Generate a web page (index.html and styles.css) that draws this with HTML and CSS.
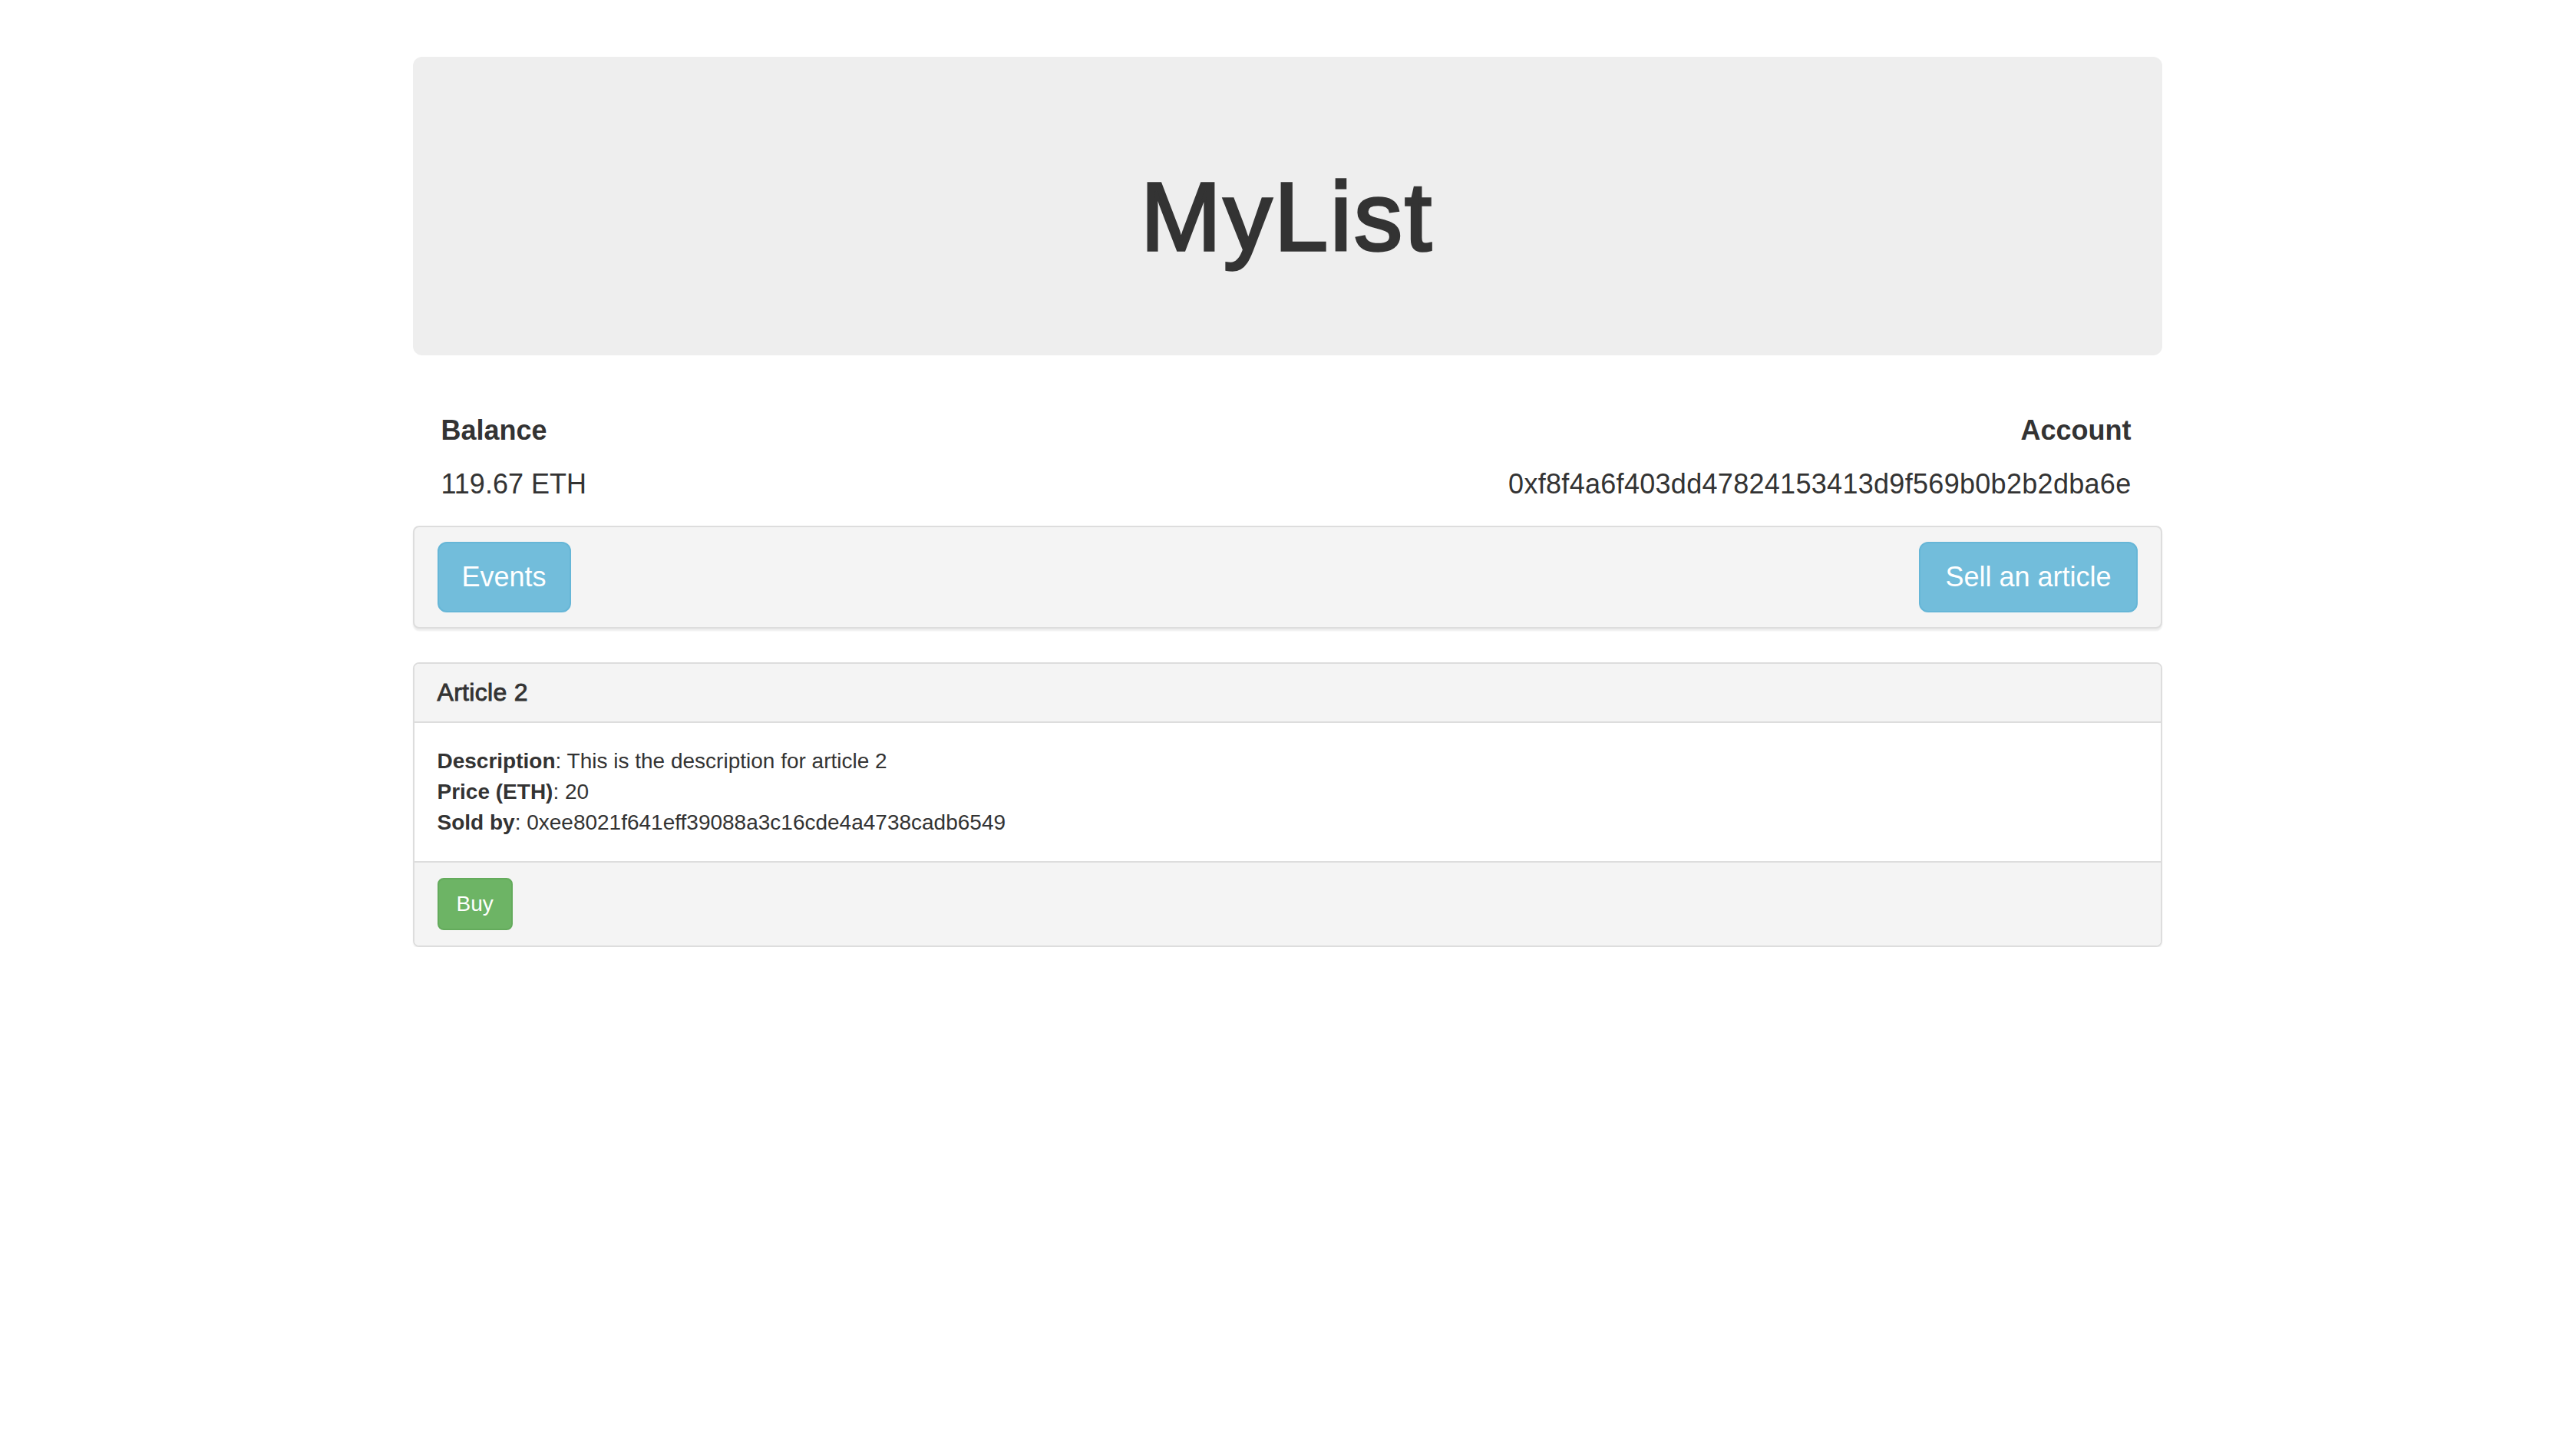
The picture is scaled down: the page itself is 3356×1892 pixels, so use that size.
FILE: index.html
```html
<!DOCTYPE html>
<html lang="en">
<head>
<meta charset="utf-8">
<title>MyList</title>
<link rel="stylesheet" href="styles.css">
</head>
<body>
<div class="container">
  <div class="jumbotron">
    <h1 class="title">MyList</h1>
  </div>

  <div class="account-row">
    <div class="account-col">
      <div class="account-label">Balance</div>
      <div class="account-value">119.67 ETH</div>
    </div>
    <div class="account-col account-col-right">
      <div class="account-label">Account</div>
      <div class="account-value account-address">0xf8f4a6f403dd47824153413d9f569b0b2b2dba6e</div>
    </div>
  </div>

  <div class="toolbar">
    <button class="btn btn-info btn-lg btn-events" type="button">Events</button>
    <button class="btn btn-info btn-lg" type="button">Sell an article</button>
  </div>

  <div class="panel">
    <div class="panel-heading">
      <h3 class="panel-title">Article 2</h3>
    </div>
    <div class="panel-body">
      <div><strong>Description</strong>: This is the description for article 2</div>
      <div><strong>Price (ETH)</strong>: 20</div>
      <div><strong>Sold by</strong>: 0xee8021f641eff39088a3c16cde4a4738cadb6549</div>
    </div>
    <div class="panel-footer">
      <button class="btn btn-success" type="button">Buy</button>
    </div>
  </div>
</div>
</body>
</html>
```

FILE: styles.css
```css
* {
  box-sizing: border-box;
}

html, body {
  margin: 0;
  padding: 0;
  background: #ffffff;
}

body {
  padding-right: 2px;
  font-family: "Helvetica Neue", Helvetica, "Liberation Sans", Arial, sans-serif;
  font-size: 28px;
  line-height: 40px;
  color: #333333;
}

.container {
  width: 2279px;
  margin: 0 auto;
  padding-top: 74px;
}

.jumbotron {
  background: #eeeeee;
  border-radius: 12px;
  padding: 96px 120px;
  margin-bottom: 60px;
  text-align: center;
}

.title {
  margin: 44px 0 14px;
  font-size: 126px;
  line-height: 138.6px;
  font-weight: 400;
  letter-spacing: 3px;
  color: #333333;
  -webkit-text-stroke: 3.5px #333333;
}

.account-row {
  display: flex;
  justify-content: space-between;
  padding: 0 40px 0 37px;
}

.account-col {
  display: flex;
  flex-direction: column;
}

.account-col-right {
  text-align: right;
}

.account-label {
  margin-top: 18px;
  font-size: 36px;
  line-height: 40px;
  font-weight: 700;
}

.account-value {
  margin-top: 30px;
  font-size: 36px;
  line-height: 40px;
}

.account-address {
  letter-spacing: 0.3px;
}

.toolbar {
  margin-top: 34px;
  display: flex;
  justify-content: space-between;
  align-items: center;
  background: #f4f4f4;
  border: 2px solid #dddddd;
  border-radius: 8px;
  padding: 19px 30px;
  box-shadow: 0 3px 2px rgba(0, 0, 0, 0.08);
}

.btn {
  display: inline-block;
  font-family: inherit;
  color: #ffffff;
  border: 2px solid transparent;
  cursor: pointer;
  text-align: center;
  white-space: nowrap;
}

.btn-lg {
  font-size: 36px;
  line-height: 48px;
  padding: 20px 32px;
  border-radius: 12px;
}

.btn-events {
  padding-left: 30px;
  padding-right: 30px;
}

.btn-info {
  background: #72bddb;
  border-color: #66b6d7;
}

.btn-success {
  font-size: 28px;
  line-height: 40px;
  padding: 12px 23px;
  border-radius: 8px;
  background: #6db465;
  border-color: #64ab5c;
}

.panel {
  margin-top: 44px;
  border: 2px solid #dddddd;
  border-radius: 8px;
  background: #ffffff;
  box-shadow: 0 2px 2px rgba(0, 0, 0, 0.05);
  overflow: hidden;
}

.panel-heading {
  background: #f4f4f4;
  border-bottom: 2px solid #dddddd;
  padding: 20px 30px;
}

.panel-title {
  margin: 0;
  font-size: 32px;
  line-height: 35.2px;
  font-weight: 400;
  letter-spacing: 0.3px;
  color: #333333;
  -webkit-text-stroke: 0.9px #333333;
}

.panel-body {
  padding: 30px;
}

.panel-body strong {
  font-weight: 700;
}

.panel-footer {
  background: #f4f4f4;
  border-top: 2px solid #dddddd;
  padding: 20px 30px;
}
```
